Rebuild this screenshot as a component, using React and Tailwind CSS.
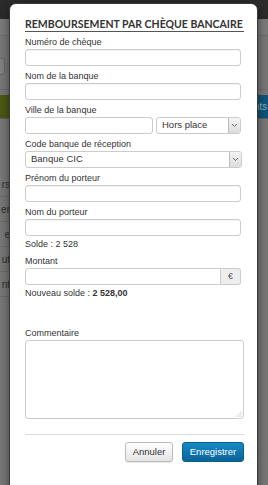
import React from 'react';

const label = "block h-[12px] leading-[12px] mb-[1px] text-[9px] text-[#333]";
const input = "block h-[17px] w-[216px] rounded-[3px] border border-[#ccc] bg-white shadow-[inset_0_1px_1px_rgba(0,0,0,0.05)]";

const Chevron = () => (
    <svg width="7" height="5" viewBox="0 0 7 5" fill="none">
        <path d="M1 1l2.5 2.5L6 1" stroke="#666" strokeWidth="1" />
    </svg>
);

const Select = ({ value, className }) => (
    <div className={`flex h-[17px] items-center rounded-[3px] border border-[#ccc] bg-white pl-[5px] ${className}`}>
        <span className="flex-1 text-[9.5px] text-[#333]">{value}</span>
        <span className="flex h-full w-[12px] items-center justify-center rounded-r-[2px] border-l border-[#bbb] bg-gradient-to-b from-[#f4f4f4] to-[#dcdcdc]">
            <Chevron />
        </span>
    </div>
);

const Field = ({ name, children }) => (
    <div className="mt-[4px]">
        <span className={label}>{name}</span>
        {children || <div className={input} />}
    </div>
);

const rows = ['rs', 'er', 'e', 'ut', 'nt'];

export default function App() {
    return (
        <div className="relative h-[485px] w-full overflow-hidden bg-[#777] font-['Liberation_Sans',Arial,sans-serif]">
            {/* dimmed page behind the dialog */}
            <div className="h-[19px] bg-[#2b2b2b]" />
            <div className="h-[17px] border-b border-[#6c6c6c] bg-[#7a7a7a]" />
            <div className="flex h-[54px] items-center border-b border-[#6c6c6c]">
                <div className="ml-[-20px] mt-[7px] h-[17px] w-[25px] rounded-[3px] border border-[#666] bg-[#808080]" />
            </div>
            <div className="mt-[5px] flex h-[24px] border-b border-[#5f5f5f]">
                <div className="flex-1 bg-[#4a5812]" />
                <div className="flex flex-1 items-center justify-end bg-[#0d5576] pr-[1px] text-[10px] text-[#8fb0c0]">nts</div>
            </div>
            <div className="mt-[53px] w-[10px]">
                {rows.map((r) => (
                    <div key={r} className="flex h-[25px] items-center justify-end border-b border-[#6a6a6a] text-[10px] text-[#2e2e2e] whitespace-nowrap">
                        {r}
                    </div>
                ))}
            </div>

            {/* dialog */}
            <div className="absolute left-[9px] top-[3px] h-[520px] w-[249px] rounded-t-[7px] border border-[#3a3a3a] bg-white pl-[15px] pr-[13px] pt-[14px] shadow-[0_3px_8px_rgba(0,0,0,0.5)]">
                <h2 className="h-[14px] whitespace-nowrap border-b border-[#555] font-['Lato',sans-serif] text-[10.5px] font-bold leading-[13px] text-[#333]">
                    REMBOURSEMENT PAR CHÈQUE BANCAIRE
                </h2>
                <div className="mt-[4px]">
                    <Field name="Numéro de chèque" />
                    <Field name="Nom de la banque" />
                    <Field name="Ville de la banque">
                        <div className="flex w-[216px] gap-[3px]">
                            <div className="h-[17px] flex-1 rounded-[3px] border border-[#ccc] bg-white" />
                            <Select value="Hors place" className="w-[85px]" />
                        </div>
                    </Field>
                    <Field name="Code banque de réception">
                        <Select value="Banque CIC" className="w-[217px]" />
                    </Field>
                    <Field name="Prénom du porteur" />
                    <Field name="Nom du porteur" />
                    <p className="mt-[2px] h-[13px] text-[9px] leading-[13px] text-[#333]">Solde : 2 528</p>
                    <Field name="Montant">
                        <div className="flex h-[17px] w-[216px]">
                            <div className="flex-1 rounded-l-[3px] border border-[#ccc] bg-white" />
                            <div className="flex w-[20px] items-center justify-center rounded-r-[3px] border border-l-0 border-[#ccc] bg-[#eee] text-[9px] text-[#555]">€</div>
                        </div>
                    </Field>
                    <p className="mt-[2px] h-[13px] text-[9px] leading-[13px] text-[#333]">
                        Nouveau solde : <span className="font-bold">2 528,00</span>
                    </p>
                    <div className="mt-[27px]">
                        <span className={label}>Commentaire</span>
                        <div className="relative h-[79px] w-[219px] rounded-[3px] border border-[#ccc] bg-white">
                            <svg className="absolute bottom-[1px] right-[1px]" width="6" height="6" viewBox="0 0 6 6">
                                <circle cx="5" cy="1" r="0.5" fill="#999" />
                                <circle cx="3" cy="3" r="0.5" fill="#999" />
                                <circle cx="5" cy="3" r="0.5" fill="#999" />
                                <circle cx="1" cy="5" r="0.5" fill="#999" />
                                <circle cx="3" cy="5" r="0.5" fill="#999" />
                                <circle cx="5" cy="5" r="0.5" fill="#999" />
                            </svg>
                        </div>
                    </div>
                    <div className="mt-[15px] border-t border-[#ddd] pt-[7px]">
                        <div className="flex justify-end gap-[9px]">
                            <button className="h-[20px] w-[48px] rounded-[3px] border border-[#bbb] bg-gradient-to-b from-white to-[#e4e4e4] text-[9.5px] text-[#333] shadow-[0_1px_1px_rgba(0,0,0,0.1)]">
                                Annuler
                            </button>
                            <button className="h-[20px] w-[62px] rounded-[3px] border border-[#0b5f8c] bg-gradient-to-b from-[#1589c4] to-[#0b649a] text-[9.5px] text-white">
                                Enregistrer
                            </button>
                        </div>
                    </div>
                </div>
            </div>
        </div>
    );
}
